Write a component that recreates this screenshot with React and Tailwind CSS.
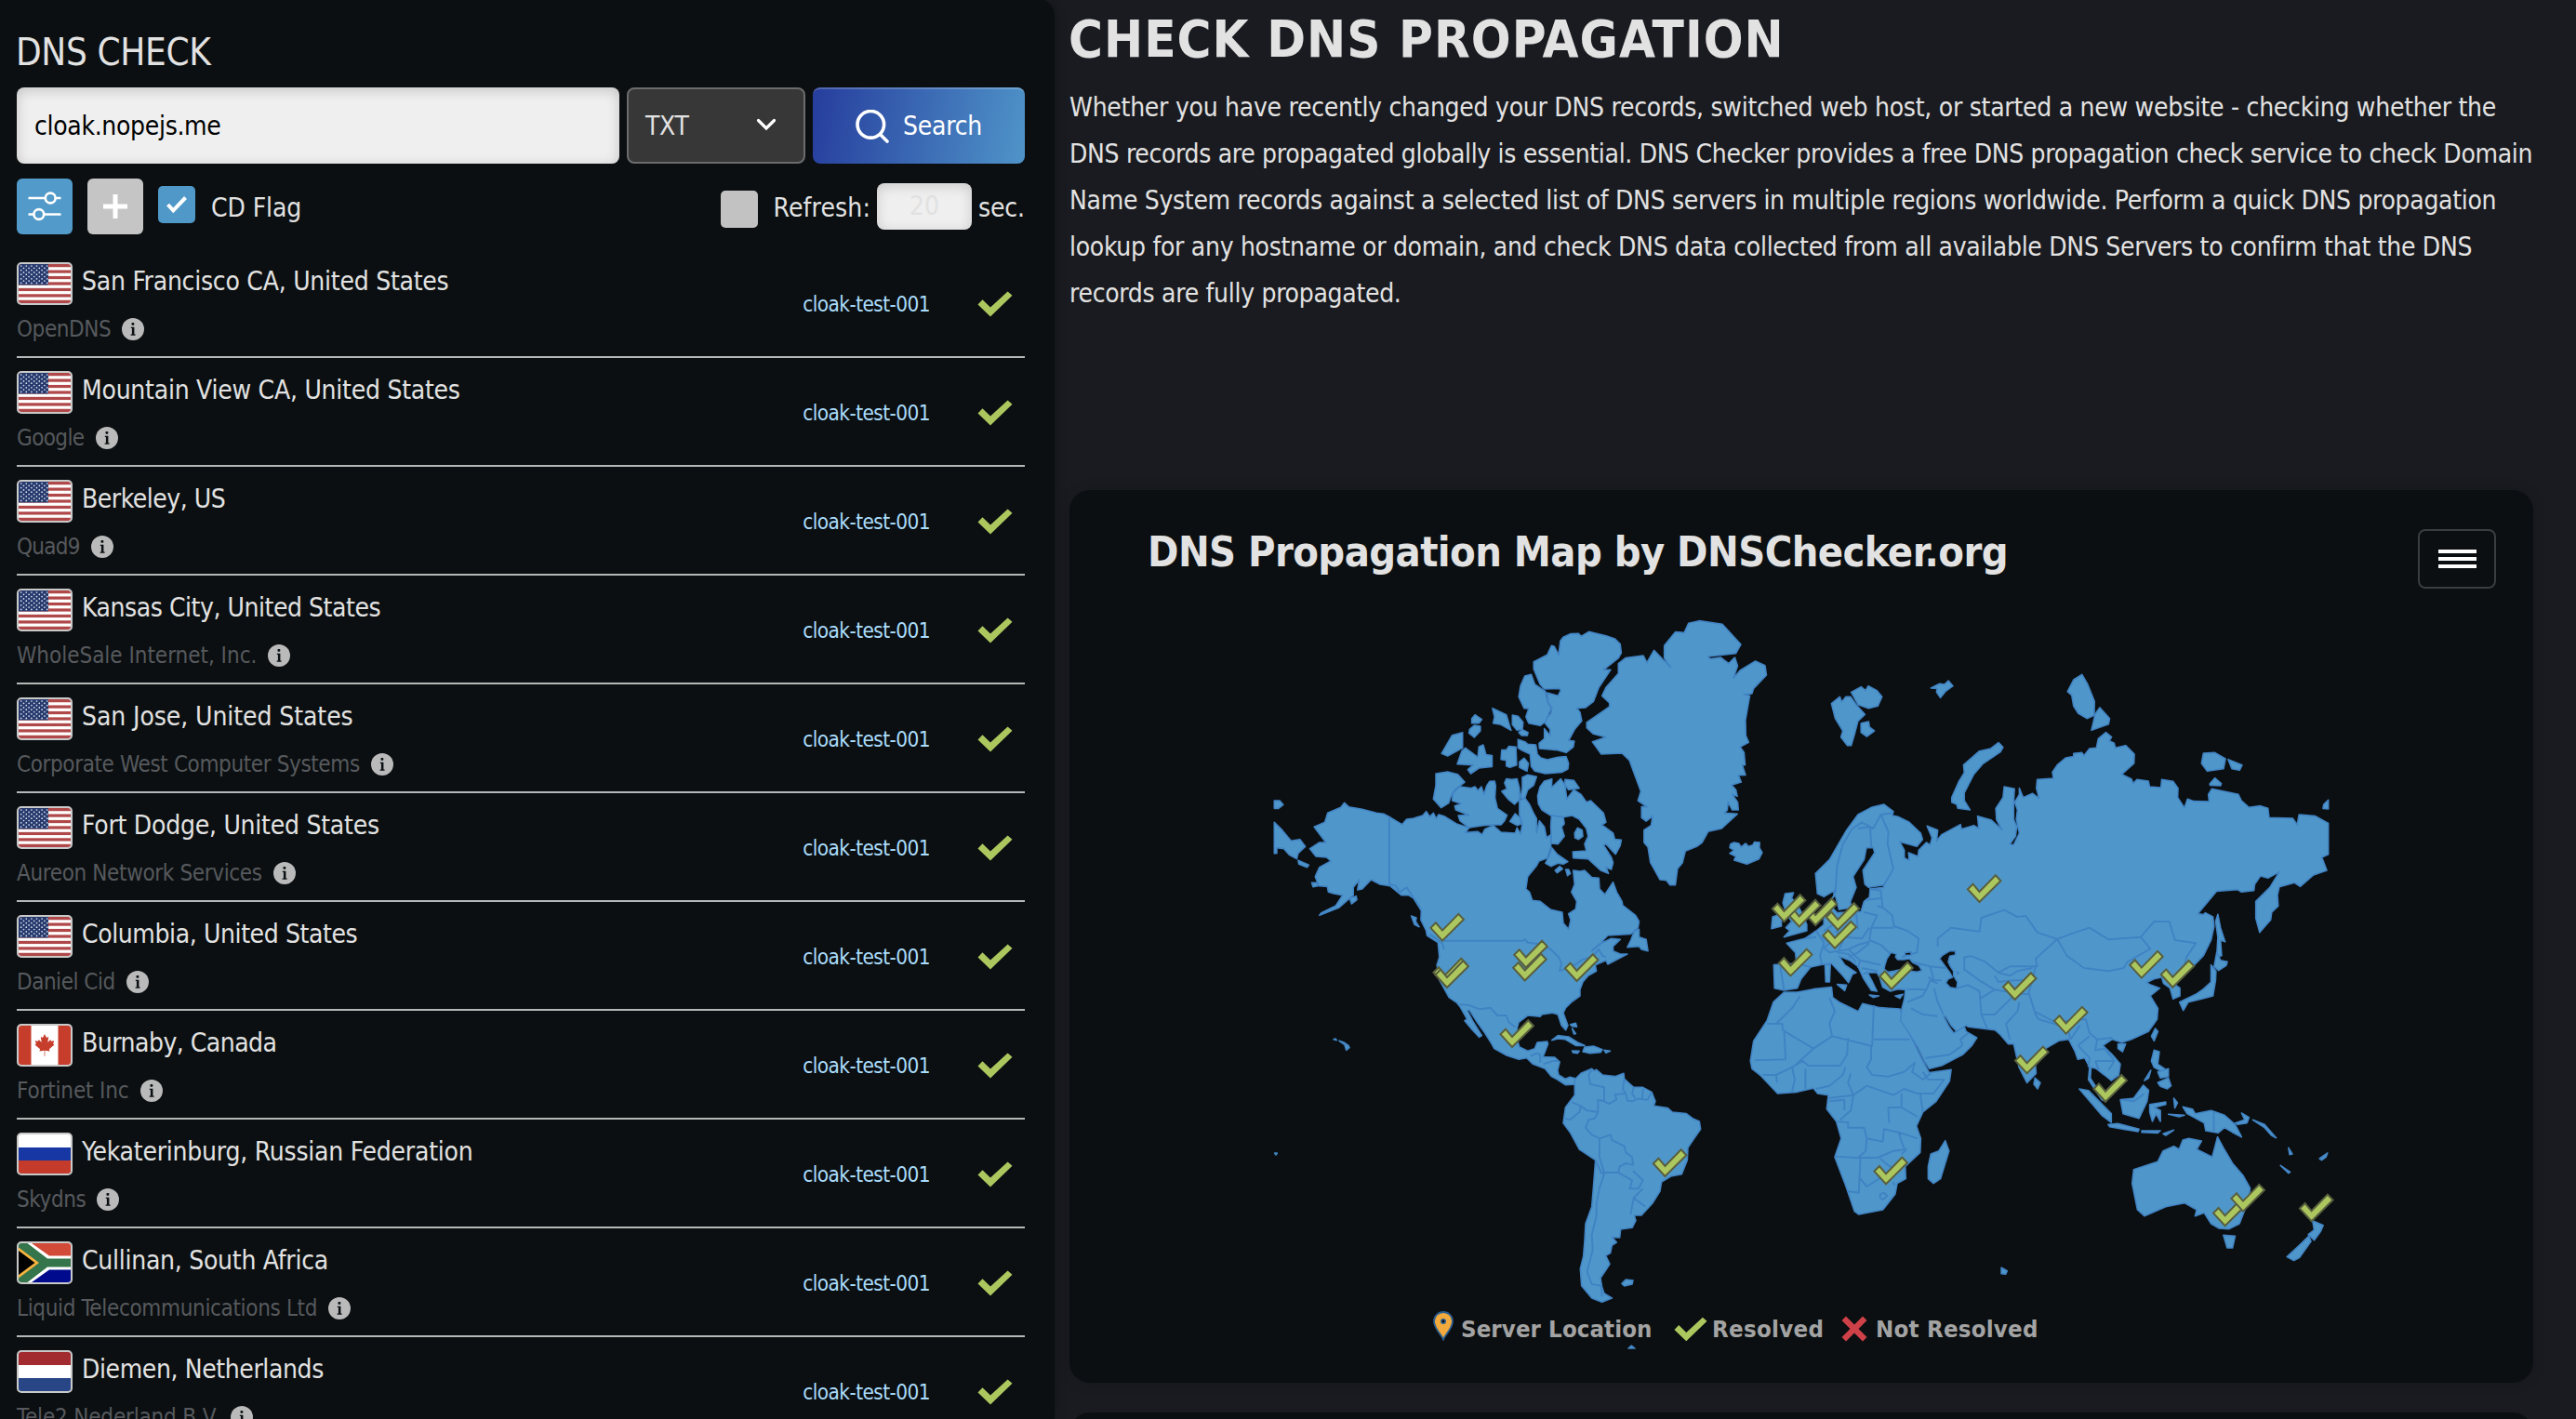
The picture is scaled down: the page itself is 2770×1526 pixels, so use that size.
import React from "react";

const SERVERS = [
  { flag: "us", city: "San Francisco CA, United States", host: "OpenDNS", cityTrack: "tracking-[-0.25px]", hostTrack: "tracking-[-0.4px]" },
  { flag: "us", city: "Mountain View CA, United States", host: "Google", cityTrack: "tracking-[-0.25px]", hostTrack: "tracking-[-0.6px]" },
  { flag: "us", city: "Berkeley, US", host: "Quad9", cityTrack: "tracking-[-0.48px]", hostTrack: "tracking-[-0.7px]" },
  { flag: "us", city: "Kansas City, United States", host: "WholeSale Internet, Inc.", cityTrack: "tracking-[-0.46px]", hostTrack: "tracking-[-0.02px]" },
  { flag: "us", city: "San Jose, United States", host: "Corporate West Computer Systems", cityTrack: "tracking-[-0.08px]", hostTrack: "tracking-[-0.38px]" },
  { flag: "us", city: "Fort Dodge, United States", host: "Aureon Network Services", cityTrack: "tracking-[-0.25px]", hostTrack: "tracking-[-0.36px]" },
  { flag: "us", city: "Columbia, United States", host: "Daniel Cid", cityTrack: "tracking-[-0.4px]", hostTrack: "tracking-[-0.48px]" },
  { flag: "ca", city: "Burnaby, Canada", host: "Fortinet Inc", cityTrack: "tracking-[-0.52px]", hostTrack: "tracking-[-0.15px]" },
  { flag: "ru", city: "Yekaterinburg, Russian Federation", host: "Skydns", cityTrack: "tracking-[-0.23px]", hostTrack: "tracking-[-0.4px]" },
  { flag: "za", city: "Cullinan, South Africa", host: "Liquid Telecommunications Ltd", cityTrack: "tracking-[-0.27px]", hostTrack: "tracking-[-0.34px]" },
  { flag: "nl", city: "Diemen, Netherlands", host: "Tele2 Nederland B.V.", cityTrack: "tracking-[-0.4px]", hostTrack: "tracking-[-0.17px]" },
];

const CHECK = "M0 0L-12.6 -13.7L-7 -19.3L0 -11L17.3 -28.7L23 -22.8Z";

function UsFlag() {
  const stripes = [0, 1, 2, 3, 4, 5, 6];
  const stars = [];
  for (let r = 0; r < 9; r++) {
    for (let c = 0; c < (r % 2 ? 5 : 6); c++) {
      stars.push([2.7 + c * 5.6 + (r % 2 ? 2.8 : 0), 2 + r * 2.3]);
    }
  }
  return (
    <svg viewBox="0 0 56 42" className="block h-full w-full">
      <rect width="56" height="42" fill="#fff" />
      {stripes.map((i) => (
        <rect key={i} y={i * 6.46} width="56" height="3.23" fill="#b04748" />
      ))}
      <rect width="32" height="22.4" fill="#263a6e" />
      {stars.map(([x, y], i) => (
        <circle key={i} cx={x} cy={y} r="0.85" fill="#dfe3ee" />
      ))}
    </svg>
  );
}

function CaFlag() {
  return (
    <svg viewBox="0 0 56 42" className="block h-full w-full">
      <rect width="56" height="42" fill="#fff" />
      <rect width="13.5" height="42" fill="#c63d2c" />
      <rect x="42.5" width="13.5" height="42" fill="#c63d2c" />
      <path
        fill="#c63d2c"
        d="M28 9l2 4 2.2-1-.9 6 3-3 .7 1.8 3.2-.5-1 3.4 1.3.9-5.6 4.6.6 2.3-5.2-.8.1 6h-.8l.1-6-5.2.8.6-2.3-5.6-4.6 1.3-.9-1-3.4 3.2.5.7-1.8 3 3-.9-6 2.2 1z"
      />
    </svg>
  );
}

function BandFlag({ bands }) {
  return (
    <svg viewBox="0 0 56 42" className="block h-full w-full">
      {bands.map((b, i) => (
        <rect key={b} y={i * 14} width="56" height="14" fill={b} />
      ))}
    </svg>
  );
}

function ZaFlag() {
  return (
    <svg viewBox="0 0 56 42" className="block h-full w-full">
      <rect width="56" height="42" fill="#fff" />
      <path d="M14 0H56V13.5H33Z" fill="#d24a38" />
      <path d="M14 42H56V28.5H33Z" fill="#000a8c" />
      <path d="M0 0H9.5L31 16.5H56V25.5H31L9.5 42H0Z" fill="#35754b" />
      <path d="M0 4.5L22 21L0 37.5Z" fill="#f6b33f" />
      <path d="M0 8L17.5 21L0 34Z" fill="#000" />
    </svg>
  );
}

function Flag({ code }) {
  return (
    <div className="h-[46px] w-[60px] shrink-0 overflow-hidden rounded-[5px] border-2 border-[#c9c9c9] bg-[#c9c9c9]">
      {code === "us" && <UsFlag />}
      {code === "ca" && <CaFlag />}
      {code === "ru" && <BandFlag bands={["#ffffff", "#1637a4", "#c43b2c"]} />}
      {code === "za" && <ZaFlag />}
      {code === "nl" && <BandFlag bands={["#a12b2e", "#ffffff", "#284686"]} />}
    </div>
  );
}

function InfoIcon() {
  return (
    <svg viewBox="0 0 24 24" className="h-6 w-6 shrink-0">
      <circle cx="12" cy="12" r="12" fill="#bababa" />
      <rect x="10.5" y="4.9" width="2.8" height="2.8" rx="0.8" fill="#0b0f11" />
      <path d="M9.8 9.8h3.6v7.8h1.2v1.2H9.6v-1.2h1.3v-6.6H9.8z" fill="#0b0f11" />
    </svg>
  );
}

function CheckIcon({ className }) {
  return (
    <svg viewBox="0 0 38 28" className={className}>
      <path d="M14 27.5L0.5 14.5L5.5 9.3L14 17.6L32.6 0.6L37.5 4.8Z" fill="#adc75f" />
    </svg>
  );
}

function ServerRow({ server }) {
  return (
    <div className="flex h-[117px] shrink-0 border-b-2 border-[#b6b8b8] pt-[14px]">
      <div className="flex flex-1 flex-col">
        <div className="flex h-[46px] gap-[10px] text-[28px] leading-[42px] whitespace-nowrap text-[#e2e2e2]">
          <Flag code={server.flag} />
          <span className={server.cityTrack}>{server.city}</span>
        </div>
        <div className="mt-[10px] flex h-8 items-center gap-[12px] text-[24px] leading-8 whitespace-nowrap text-[#56595d]">
          <span className={server.hostTrack}>{server.host}</span>
          <InfoIcon />
        </div>
      </div>
      <span className="mt-[29px] mr-[51px] text-[22.4px] leading-8 tracking-[-0.57px] whitespace-nowrap text-[#aadcfb]">
        cloak-test-001
      </span>
      <CheckIcon className="mt-[31px] mr-[13px] h-7 w-[38px]" />
    </div>
  );
}

function Panel() {
  return (
    <aside className="-mt-[2px] flex h-[1528px] w-[1134px] shrink-0 flex-col overflow-hidden rounded-tr-[20px] bg-[#0b0f11] pr-8 pl-[18px] shadow-[0_0_12px_rgba(0,0,0,0.35)]">
      <h2 className="mt-[28px] ml-[-1px] shrink-0 text-[40px] leading-[60px] tracking-[-0.34px] text-[#e2e2e2]">
        DNS CHECK
      </h2>
      <div className="mt-2 flex h-[82px] shrink-0 gap-2">
        <div className="flex w-[648px] items-center rounded-lg bg-[#efefef] pt-[2px] pl-[19px] text-[28px] tracking-[-0.32px] text-black shadow-[inset_0_3px_14px_rgba(0,0,0,0.18)]">
          cloak.nopejs.me
        </div>
        <div className="flex w-[192px] items-center justify-between rounded-lg border-2 border-[#6c6c6c] bg-[#373737] pt-[2px] pr-[28px] pl-[18px] text-[28px] tracking-[-0.32px] text-[#e2e2e2]">
          TXT
          <svg viewBox="0 0 24 16" className="-mt-1 h-4 w-6">
            <path d="M3.5 3.5L12 12L20.5 3.5" fill="none" stroke="#fff" strokeWidth="3.2" strokeLinecap="round" />
          </svg>
        </div>
        <div className="flex w-[228px] items-center gap-[15px] rounded-lg border-t-2 border-white/20 bg-[linear-gradient(100deg,#263d9d_0%,#4f94c9_100%)] bg-origin-border pl-[46px] text-[28px] tracking-[-0.24px] text-white">
          <svg viewBox="0 0 36 36" className="h-9 w-9 shrink-0">
            <circle cx="16.3" cy="15.8" r="14.3" fill="none" stroke="#fff" strokeWidth="3.6" />
            <path d="M26.5 26.5L34 34" stroke="#fff" strokeWidth="3.6" strokeLinecap="round" />
          </svg>
          Search
        </div>
      </div>
      <div className="mt-4 flex h-[60px] shrink-0 items-center text-[28px] text-[#e2e2e2]">
        <div className="flex h-[60px] w-[60px] items-center justify-center rounded-md bg-[#519ac9]">
          <svg viewBox="0 0 36 32" className="h-8 w-9" fill="none" stroke="#fff" strokeWidth="2.6">
            <path d="M0.5 7H18.5M30 7H35.5" />
            <circle cx="24.2" cy="7" r="5.4" />
            <path d="M0.5 24.5H6M17.5 24.5H35.5" />
            <circle cx="11.8" cy="24.5" r="5.4" />
          </svg>
        </div>
        <div className="ml-4 flex h-[60px] w-[60px] items-center justify-center rounded-md bg-[#c5c5c5]">
          <svg viewBox="0 0 26 26" className="h-[26px] w-[26px]">
            <path d="M13 0V26M0 13H26" stroke="#fff" strokeWidth="5" />
          </svg>
        </div>
        <div className="mt-2 ml-4 flex h-10 w-10 items-center justify-center self-start rounded-[5px] bg-[#5098c8]">
          <svg viewBox="0 0 24 20" className="h-5 w-6">
            <path d="M2.5 10L8.3 16.3L21.5 2.5" fill="none" stroke="#fff" strokeWidth="4" />
          </svg>
        </div>
        <span className="mt-[3px] ml-[17px] tracking-[-0.1px]">CD Flag</span>
        <div className="mt-[6px] ml-auto h-10 w-10 rounded-[5px] bg-[#c2c2c2]" />
        <span className="mt-[3px] ml-[17px] tracking-[0.12px]">Refresh:</span>
        <div className="ml-[7px] flex h-[50px] w-[102px] items-center justify-center rounded-lg bg-[#efefef] text-[#e1e1e1] shadow-[inset_0_3px_14px_rgba(0,0,0,0.16)]">
          20
        </div>
        <span className="mt-[3px] ml-[7px] w-[50px] tracking-[-0.16px]">sec.</span>
      </div>
      <div className="mt-4 flex shrink-0 flex-col">
        {SERVERS.map((s) => (
          <ServerRow key={s.city} server={s} />
        ))}
      </div>
    </aside>
  );
}

/* Land shapes of the western half */
const NORTH_AMERICA = [
  "M250 667L262 680L300 688L340 700L360 703L380 715L412 737L425 720L445 717L470 708L480 695L490 712L500 700L508 718L515 705L530 710L565 735L600 748L590 763L625 760L637 770L645 752L668 740L690 762L730 765L735 748L745 768L750 735L742 705L742 660L757 652L770 672L782 702L790 718L790 765L798 725L812 745L818 780L830 770L830 810L820 845L797 855L790 870L765 905L760 945L770 955L778 982L800 985L830 1012L862 1020L865 1055L880 1075L886 1045L880 1025L900 1010L903 985L888 955L897 930L893 885L912 888L925 885L945 908L965 910L967 945L982 963L1005 923L1015 955L1030 985L1032 998L1068 1030L1078 1050L1075 1070L1055 1090L990 1095L965 1125L945 1145L975 1118L1000 1105L1025 1108L1005 1130L1005 1145L1025 1155L1045 1155L990 1188L985 1175L955 1190L958 1210L935 1225L920 1245L912 1270L912 1290L890 1308L872 1328L865 1345L878 1385L872 1400L860 1385L850 1350L835 1345L805 1350L800 1357L765 1353L740 1375L735 1395L735 1430L742 1455L765 1468L785 1460L792 1440L820 1437L822 1445L808 1487L841 1488L855 1503L849 1530L852 1545L871 1558L884 1552L910 1560L905 1575L871 1577L849 1560L832 1550L814 1525L780 1510L762 1490L740 1495L706 1482L671 1460L664 1445L645 1410L623 1375L601 1335L595 1337L610 1370L636 1418L629 1423L610 1400L588 1370L595 1365L575 1325L566 1312L544 1295L531 1268L515 1235L510 1190L517 1165L513 1118L482 1095L480 1080L465 1045L466 1015L445 975L430 965L410 965L378 935L350 930L325 915L300 945L287 948L292 915L275 940L275 965L235 1005L180 1030L185 1022L225 1000L245 965L220 960L205 955L202 937L178 935L168 905L180 875L212 855L200 843L170 840L153 815L180 795L198 795L165 745L195 730L203 700L240 682Z",
  "M1180 116L1205 118L1217 88L1247 80L1312 91L1364 156L1350 185L1272 195L1278 203L1307 198L1330 218L1347 198L1355 225L1343 265L1362 240L1405 210L1432 224L1436 255L1400 298L1395 315L1373 317L1389 322L1377 400L1378 450L1386 472L1362 487L1373 505L1376 545L1368 545L1377 577L1357 578L1365 600L1338 610L1350 625L1354 646L1340 640L1355 665L1357 690L1340 690L1328 665L1326 690L1318 700L1354 703L1310 750L1272 760L1255 795L1240 808L1208 823L1200 860L1186 880L1180 932L1165 932L1155 917L1137 915L1110 860L1103 810L1092 795L1092 755L1112 740L1116 710L1098 726L1085 715L1085 680L1100 680L1075 660L1083 630L1062 565L1051 530L1030 507L972 510L947 470L985 455L950 445L931 425L931 408L995 357L995 345L974 322L985 295L1020 250L1020 218L1040 200L1090 192L1100 215L1120 175L1145 205L1167 230L1149 200L1149 160Z",
  "M1335 800L1345 795L1358 798L1365 810L1378 798L1385 808L1398 803L1402 794L1417 795L1416 812L1424 828L1415 848L1381 865L1345 852L1350 840L1333 830L1345 820L1333 812Z",
  "M908 121L885 122L865 133L857 145L852 190L840 163L832 160L820 190L782 212L782 235L800 285L812 300L855 298L858 305L850 322L820 312L822 340L833 362L830 380L812 400L815 412L828 430L828 450L812 428L812 460L797 475L798 492L850 497L873 505L893 487L896 468L880 466L897 430L917 403L912 375L903 362L927 360L950 340L965 295L998 238L978 238L1020 200L1028 183L1025 155L1010 138L985 128L937 115L915 130Z",
  "M757 258L775 253L785 285L815 308L820 340L831 362L815 405L800 418L768 410L760 390L768 363L755 362L740 325L745 290Z",
  "M608 395L617 383L636 398L628 410L608 410Z",
  "M602 430L615 417L632 420L632 435L615 456L600 442Z",
  "M582 440L582 490L540 516L523 508L553 449Z",
  "M666 362L705 383L718 433L690 415L668 410L672 390Z",
  "M722 384L738 388L752 407L750 430L735 433L722 415Z",
  "M740 440L750 431L766 440L764 450L748 450Z",
  "M590 490L625 520L628 487L640 480L648 512L665 515L665 550L628 555L605 573L597 560L612 545L567 542L580 500Z",
  "M692 497L705 497L712 485L732 487L734 545L715 553L705 548L705 530L690 527Z",
  "M755 523L767 540L763 565L742 553L742 535Z",
  "M738 463L757 470L765 478L788 480L792 510L802 522L820 528L850 520L873 518L880 540L878 558L862 568L815 573L785 565L775 550L772 510L750 498L738 490Z",
  "M507 573L540 567L568 575L588 600L560 625L548 650L543 668L522 683L500 655L507 610Z",
  "M555 635L575 615L605 620L617 615L625 628L635 615L642 640L650 612L658 598L672 597L675 612L673 650L680 685L707 707L700 725L690 738L670 738L640 740L600 747L575 725L570 708L600 707L563 690L560 677L578 670L553 660Z",
  "M705 590L720 592L735 590L742 620L743 655L728 672L710 655L692 630L707 622L700 603Z",
  "M750 585L765 577L790 583L782 610L765 625L757 652L745 652L750 620Z",
  "M730 702L745 717L747 735L735 740L715 727Z",
  "M793 645L800 615L812 597L833 590L832 618L858 590L870 610L875 655L895 625L915 640L930 665L942 660L978 700L985 730L973 738L1005 765L1010 785L1028 787L1025 805L1012 833L985 800L978 803L1000 843L1005 860L1000 882L985 875L992 895L970 885L935 848L893 845L892 825L930 822L925 800L935 775L930 750L910 720L890 708L865 713L830 708L805 690L795 670Z",
  "M870 592L895 595L910 620L880 625L870 610Z",
  "M832 708L865 714L868 735L860 745L868 775L850 800L832 798L830 740Z",
  "M897 765L905 748L918 755L920 775L908 785L898 780Z",
  "M833 812L848 833L878 857L865 865L850 862L830 872L815 862L825 840Z",
  "M842 885L855 872L863 880L848 893Z",
  "M872 882L880 882L885 895L877 902Z",
  "M53 730L75 755L100 790L125 785L140 808L120 830L116 848L95 835L80 815L60 812L60 830L53 830Z",
  "M53 660L68 660L78 673L65 685L53 685Z",
  "M120 853L150 868L145 875L122 865Z",
  "M265 975L283 968L285 980L270 993Z",
  "M158 925L172 925L175 935L162 938Z",
  "M438 1032L452 1038L450 1050L460 1067L447 1060Z",
  "M1065 1080L1078 1075L1078 1100L1098 1108L1103 1145L1085 1140L1078 1130L1045 1133L1055 1110Z",
  "M833 1433L850 1418L880 1422L905 1440L925 1450L900 1450L870 1430L850 1428Z",
  "M925 1455L950 1452L975 1463L970 1472L940 1475L920 1470Z",
  "M890 1467L910 1468L905 1475L892 1473Z",
  "M980 1465L997 1468L985 1474Z",
  "M885 1382L900 1378L903 1390L890 1388Z",
  "M890 1395L900 1412L895 1413Z",
];
const NORTH_AMERICA_BORDERS =
  "M376 715L376 928L395 935L405 955L425 940L445 975L465 1010M490 1090L525 1120L530 1140M525 1112L752 1112L757 1107L765 1118L800 1123L830 1140L852 1165L860 1185L855 1210L900 1188L920 1172L945 1165L965 1140L975 1160L985 1165M945 1145L965 1125M575 1318L600 1320L630 1333L660 1328L680 1353L705 1353L712 1375L730 1390M772 1485L790 1475L800 1478L800 1505M809 1510L835 1500L852 1500";

const SOUTH_AMERICA = [
  "M1030 300L1050 280L1085 265L1092 272L1100 268L1120 285L1160 290L1188 280L1190 298L1220 325L1250 325L1278 340L1290 370L1285 385L1330 392L1345 405L1390 410L1410 425L1432 435L1436 460L1415 490L1395 520L1393 560L1375 605L1340 612L1310 630L1305 660L1280 700L1245 738L1222 738L1227 755L1215 778L1178 783L1175 810L1150 808L1165 825L1150 835L1145 860L1130 868L1143 895L1130 915L1113 940L1118 970L1125 990L1150 1005L1118 1018L1085 1005L1052 965L1048 910L1058 870L1062 820L1065 765L1085 710L1090 650L1097 560L1045 525L1015 470L993 440L1000 390L1030 350Z",
  "M1182 958L1195 945L1218 948L1215 960L1190 966Z",
  "M1203 1167L1213 1158L1224 1167Z",
  "M62 537L70 537L66 543Z",
  "M252 170L258 168L262 173Z",
  "M270 175L285 180L300 190L303 197L293 205L288 188Z",
];
const SOUTH_AMERICA_BORDERS =
  "M1085 268L1075 285L1080 315L1125 325L1125 370L1105 365L1105 405L1070 400L1050 385L1020 373M1050 385L1045 405L1015 430L1000 425M1105 405L1095 425L1075 430L1065 455L1085 478L1110 490L1145 478L1150 495L1190 515L1195 535L1215 550L1218 575L1195 570L1175 580L1170 600L1125 600L1110 550L1110 490M1097 560L1115 600L1125 605L1110 650L1100 700L1100 740L1085 800L1088 850L1070 920L1085 960L1115 965L1118 1000M1170 600L1215 625L1208 652L1235 652L1250 625L1218 595M1250 652L1220 682L1258 710M1220 682L1210 735M1190 298L1185 330L1195 345L1160 348L1165 365L1140 378L1125 370M1195 345L1200 368L1215 370L1235 362L1265 365L1275 345M1220 325L1215 345L1225 360M1250 330L1248 362";

/* Land shapes of the eastern half */
const EURASIA = [
  "M275 682L308 672L333 695L330 708L345 712L375 730L405 765L410 785L395 808L350 793L362 820L362 845L375 853L373 828L398 840L400 820L420 795L430 803L435 780L422 742L450 755L447 790L460 770L510 737L512 752L545 740L558 750L555 710L590 722L620 755L605 722L603 685L622 650L625 615L652 622L650 665L650 720L658 745L655 775L640 800L650 803L665 765L657 720L660 690L653 665L665 640L665 620L675 650L700 637L717 653L710 620L712 592L755 588L752 568L765 545L787 522L808 518L808 508L830 505L835 515L850 492L868 490L873 460L893 440L908 455L902 467L915 475L918 490L945 482L968 510L967 540L935 575L960 590L965 605L975 592L1005 597L1008 615L1038 618L1040 592L1070 598L1083 620L1082 650L1100 683L1108 655L1125 662L1165 663L1163 640L1172 622L1242 640L1250 660L1270 682L1300 677L1320 685L1323 715L1385 717L1397 738L1402 705L1445 710L1479 733L1479 833L1462 843L1475 885L1440 900L1405 937L1390 925L1350 938L1345 965L1347 1000L1330 1020L1327 1045L1298 1085L1288 1040L1288 985L1325 940L1350 890L1320 910L1300 903L1285 930L1283 950L1250 955L1240 947L1185 952L1135 1025L1150 1028L1155 1022L1175 1035L1178 1065L1170 1110L1150 1160L1122 1195L1100 1215L1072 1225L1065 1245L1088 1265L1088 1290L1070 1300L1062 1265L1045 1250L1040 1230L1020 1235L1000 1247L1012 1255L1035 1265L1010 1290L1030 1330L1028 1365L1005 1405L960 1430L935 1440L910 1430L885 1450L910 1480L931 1510L927 1545L907 1563L889 1545L868 1525L854 1520L852 1555L865 1580L880 1595L893 1630L882 1625L863 1590L847 1560L850 1520L837 1490L819 1495L812 1470L795 1430L769 1435L734 1460L706 1490L709 1540L685 1570L664 1520L650 1445L636 1445L615 1415L601 1400L530 1390L525 1385L500 1405L485 1385L470 1355L465 1355L480 1390L492 1410L520 1390L525 1405L553 1425L540 1450L515 1480L460 1515L428 1525L415 1500L397 1455L369 1400L352 1370L355 1333L362 1300L365 1270L345 1268L325 1275L305 1262L297 1230L290 1215L265 1215L278 1245L290 1275L275 1272L255 1235L240 1195L218 1175L190 1162L205 1190L235 1215L225 1220L215 1247L200 1225L170 1185L140 1190L115 1197L90 1235L80 1265L45 1272L20 1265L18 1190L78 1185L75 1150L52 1120L100 1105L130 1080L150 1060L150 1000L175 970L178 950L150 970L133 960L128 895L165 850L210 755L240 705Z",
  "M170 347L192 325L197 342L208 325L220 325L235 350L258 382L240 403L232 440L222 482L212 482L195 455L200 435L180 395Z",
  "M222 310L248 293L260 305L267 290L290 305L303 325L292 355L268 362L240 350Z",
  "M248 410L268 405L270 423L283 435L263 453L248 440Z",
  "M432 297L455 283L468 285L478 273L490 290L470 308L457 328L447 310L448 298Z",
  "M830 253L845 285L863 340L862 385L843 395L820 378L808 355L803 320L792 308L808 270Z",
  "M877 360L903 395L900 413L855 433L865 380Z",
  "M610 473L622 488L615 503L568 542L545 575L520 635L520 660L535 690L503 685L500 672L487 665L487 650L505 600L520 570L518 545L560 500L590 492Z",
  "M1150 507L1180 505L1208 525L1203 557L1160 565L1145 540Z",
  "M1215 527L1252 545L1245 562L1225 557Z",
  "M1167 605L1180 587L1197 605L1195 612L1167 610Z",
  "M1479 658L1479 687L1465 685L1467 672Z",
  "M1188 1027L1195 1070L1207 1115L1195 1110L1198 1160L1185 1165L1188 1100L1182 1050Z",
  "M1185 1150L1195 1175L1213 1180L1210 1192L1190 1208L1178 1195Z",
  "M1170 1190L1183 1210L1182 1240L1175 1290L1145 1300L1110 1310L1097 1337L1087 1310L1130 1285L1150 1268L1170 1245Z",
  "M48 960L70 957L65 975L78 990L95 1030L105 1060L105 1080L45 1100L60 1080L50 1070L65 1050L50 1020L42 990Z",
  "M15 1035L38 1025L38 1065L12 1073Z",
  "M153 1190L167 1190L165 1245L155 1245Z",
  "M185 1253L210 1255L205 1273Z",
  "M270 1287L295 1290L280 1295Z",
  "M338 1290L358 1285L350 1298Z",
  "M1023 1395L1030 1405L1020 1435L1013 1420Z",
  "M925 1445L945 1445L937 1470L925 1460Z",
];
const BALTIC_SEA = [
  "M308 932L268 940L258 930L253 885L284 828L280 812L262 812L256 850L227 905L235 940L220 985L222 1005L190 1012L180 965L172 975L168 1000L185 1022L248 1018L256 985L270 972L272 945L308 940Z",
];
const INNER_SEAS = [
  "M440 322L447 300L460 280L478 285L475 295L482 303L500 303L520 300L530 312L550 322L560 338L545 343L520 340L490 335L470 340L450 343L438 333Z",
  "M505 280L525 278L525 288L505 290Z",
  "M617 300L625 290L650 275L668 275L668 288L650 292L645 310L652 325L662 340L662 355L675 375L672 397L650 392L637 378L645 365L658 360L650 345L635 325Z",
  "M672 342L680 346L675 350Z",
];
const EURASIA_BORDERS =
  "M450 1130L450 1105L485 1070L560 1082L565 1038L625 1013L660 1035L682 1032L712 1085L765 1107L735 1140L708 1170L712 1195L640 1195L610 1215L575 1180L540 1162L520 1165L520 1210M765 1107L800 1090L850 1070L900 1108L985 1100L1020 1050L1060 1050L1075 1110L1130 1120L1105 1165L1100 1200M765 1107L790 1160L835 1200L900 1210L940 1200L950 1180L1010 1138L985 1100M708 1195L690 1280L705 1340L760 1375L840 1365L850 1410L870 1430L910 1425M380 1180L430 1195L470 1200M430 1195L440 1240L460 1240M440 1240L425 1230M440 1265L450 1310L465 1350M500 1265L530 1255L560 1275L565 1350L580 1395M560 1300L600 1270L650 1280L690 1285M520 1205L560 1240L600 1270M565 1350L600 1350L650 1290M665 1310L660 1340L630 1380L640 1430M450 1250L430 1240L420 1270L370 1268M370 1310L410 1290L420 1270M380 1330L410 1350L450 1355M418 1490L480 1480L515 1450M515 1450L510 1430L530 1410M705 1345L715 1365L770 1385M790 1385L800 1430M825 1385L800 1430M850 1420L820 1450L850 1490L847 1520M870 1430L865 1465L890 1460L915 1500L900 1530M865 1500L915 1500M865 1500L875 1530M610 1215L640 1225L660 1210L700 1200M600 1225L610 1245L650 1240L690 1240M240 750L272 745L275 812M272 745L250 730M300 705L320 760L318 800L333 880L308 933M180 960L185 870L200 800L225 750L250 730L280 750L300 705L333 700M270 945L300 950L305 1005L330 1030L335 1065L370 1080L400 1105L395 1150L355 1165M300 975L260 980M255 1020L290 1030L275 1070L335 1070M290 1000L305 1005M275 1070L270 1110L300 1125L330 1160M270 1120L240 1150M145 1100L165 1120L150 1135L165 1150L215 1140L240 1125L270 1115M215 1140L245 1175L300 1190M45 1272L40 1230L35 1195M78 1185L115 1197M130 1080L150 1120L140 1160L145 1190M100 1105L130 1100M240 1150L215 1165M245 1175L240 1200M205 1100L250 1105L270 1070M180 1080L205 1100L190 1140M185 1150L215 1155L235 1180M250 1200L290 1210M255 1220L265 1212M150 1080L175 1060M235 1025L240 1075";

const SOUTH_EAST = [
  "M485 -42L510 -42L540 -52L574 -58L576 -25L590 -8L624 20L632 -5L665 8L702 12L708 40L725 110L745 180L757 218L798 208L795 245L770 310L745 345L733 390L741 430L740 475L712 520L713 560L697 575L693 610L670 660L625 675L617 665L600 580L580 490L592 430L583 375L565 335L568 290L548 285L540 268L510 280L473 285L440 225L425 205L422 180L428 115L453 50L465 -10Z",
  "M787 437L794 470L778 560L765 575L755 560L755 520L760 480L775 470Z",
  "M955 235L965 250L960 270L953 255Z",
  "M1243 430L1267 438L1258 465L1287 490L1297 425L1308 460L1325 510L1345 550L1358 590L1355 630L1338 705L1318 722L1300 720L1285 705L1272 670L1255 680L1258 660L1235 638L1200 650L1160 680L1147 660L1137 575L1140 530L1185 505L1195 470L1215 455L1225 465L1232 435Z",
  "M1308 742L1330 745L1325 783L1315 783Z",
  "M1475 695L1495 710L1490 730L1478 758L1467 740L1478 725Z",
  "M1468 745L1472 762L1450 815L1440 824L1427 812L1450 775Z",
  "M1038 270L1055 275L1098 350L1098 378L1080 355Z",
  "M1092 385L1110 382L1150 400L1148 408L1095 392Z",
  "M1155 405L1190 405L1185 412L1155 410Z",
  "M1195 415L1215 403L1200 420Z",
  "M1115 305L1140 300L1158 258L1168 275L1165 310L1150 365L1120 350Z",
  "M1170 320L1200 312L1200 320L1178 330L1190 340L1190 375L1182 350L1175 375L1170 345Z",
  "M1215 300L1222 315L1217 332Z",
  "M1205 352L1235 355L1225 360Z",
  "M1232 328L1250 335L1255 350L1285 340L1310 355L1330 385L1342 425L1325 410L1310 395L1298 412L1275 405L1272 380L1240 350Z",
  "M1330 380L1348 370L1342 348L1356 362L1352 380L1335 385Z",
  "M1363 370L1385 385L1407 428L1398 420L1385 395Z",
  "M1430 460L1437 480L1432 482Z",
  "M1415 517L1433 538L1430 542Z",
  "M1488 495L1503 477L1500 490L1492 500Z",
  "M1178 145L1188 150L1185 190L1198 205L1195 215L1178 200L1173 180Z",
  "M1185 250L1205 235L1210 260L1203 270L1190 262Z",
  "M1185 215L1205 205L1205 230L1190 235Z",
  "M1172 210L1168 235L1160 243Z",
  "M892 847L903 857L900 868L892 866Z",
];
const SOUTH_EAST_BORDERS =
  "M453 60L482 60L482 80M485 80L488 175L430 178M482 80L540 140L575 100L650 132L653 0M653 110L720 110M470 60L500 10L515 -30M570 -25L580 20L570 60L575 100M648 132L648 175L640 200L650 225L680 230L710 215L730 185L725 215L745 240L760 220M605 105L603 160L590 195L530 195L520 180L500 200L470 225M600 200L595 225L570 260L545 270M525 205L525 270M500 200L505 240L500 280M445 225L470 225L472 250M610 220L605 250L615 290L568 300M615 290L640 260L690 290L710 270L735 285L765 285L785 240L755 240L745 215M740 285L745 345M705 285L705 330L735 360M680 330L705 330M680 330L682 380M585 375L605 378L605 395L635 395L640 430L670 440L672 400L700 410L735 430M580 488L620 492L660 492L690 470L715 465M640 430L638 470L625 490M628 495L625 605L605 600M628 560L640 585L690 530L700 530M665 495L690 530M700 410L705 440L712 470L705 480M665 610L672 605L678 615L670 628L665 620ZM690 570L692 582M615 290L610 340L590 370M570 310L598 305L598 340M1290 345L1290 405M540 140L505 195M1120 305L1140 310L1160 285";

const MARKERS = [
  [1551, 1010.6], [1554, 1058.5], [1556, 1061], [1640.8, 1039.5], [1639.7, 1053.5], [1695.5, 1054], [1626, 1125],
  [1952.2, 994], [1934.7, 995.5], [1918.4, 990], [1976.3, 999], [1973, 1018.7], [1925.4, 1048.4], [2033.9, 1062.7],
  [2128.5, 969], [2166.5, 1074], [2221.6, 1110.6], [2302.8, 1050.6], [2336.3, 1060.7], [2179.6, 1153.3],
  [2264, 1183.7], [1790.4, 1264], [2028, 1272.3], [2392.6, 1317.3], [2412, 1301.6], [2485.6, 1312.3],
];

function Shapes({ shapes, fill }) {
  return shapes.map((d) => (
    <path key={d} d={d} fill={fill} stroke="#4284c4" strokeWidth="1.6" strokeLinejoin="round" vectorEffect="non-scaling-stroke" />
  ));
}

function Borders({ d }) {
  return <path d={d} fill="none" stroke="#4083c3" strokeWidth="2" strokeLinejoin="round" vectorEffect="non-scaling-stroke" />;
}

function WorldMap() {
  return (
    <svg viewBox="1370 660 1140 740" className="mt-[28px] ml-[220px] block h-[740px] w-[1140px] shrink-0 overflow-visible">
      <g transform="translate(1640 1080) scale(0.57405 0.33333)">
        <Shapes shapes={SOUTH_EAST} fill="#4f97cb" />
        <Borders d={SOUTH_EAST_BORDERS} />
      </g>
      <g transform="translate(1900 640) scale(0.40816 0.33333)">
        <Shapes shapes={EURASIA} fill="#4f97cb" />
        <Shapes shapes={BALTIC_SEA} fill="#0b0f11" />
        <Borders d={EURASIA_BORDERS} />
      </g>
      <g transform="translate(1880 930) scale(0.33333)">
        <Shapes shapes={INNER_SEAS} fill="#0b0f11" />
      </g>
      <g transform="translate(1350 640) scale(0.38265 0.33333)">
        <Shapes shapes={NORTH_AMERICA} fill="#4f97cb" />
        <Borders d={NORTH_AMERICA_BORDERS} />
      </g>
      <g transform="translate(1350 1060) scale(0.33333)">
        <Shapes shapes={SOUTH_AMERICA} fill="#4f97cb" />
        <Borders d={SOUTH_AMERICA_BORDERS} />
      </g>
      {MARKERS.map(([x, y]) => (
        <path key={`${x}-${y}`} d={CHECK} transform={`translate(${x} ${y})`} fill="#adc75f" stroke="#585f3f" strokeWidth="2" />
      ))}
    </svg>
  );
}

function Legend() {
  return (
    <div className="mt-2 ml-[391px] flex h-10 shrink-0 items-center text-[25.6px] font-bold text-[#a3a3a3]">
      <svg viewBox="0 0 22 32" className="-mt-[7px] h-8 w-[22px] shrink-0">
        <path d="M11 30.5C9.5 26 1 18.5 1 11A10 10 0 0 1 21 11C21 18.5 12.5 26 11 30.5Z" fill="#f3aa3c" stroke="#2c5f92" strokeWidth="1.8" />
        <circle cx="11" cy="11" r="2.2" fill="#0b0f11" stroke="#2c5f92" strokeWidth="1.6" />
      </svg>
      <span className="ml-2 w-[229px] tracking-[0.08px] whitespace-nowrap">Server Location</span>
      <CheckIcon className="h-[27px] w-9 shrink-0" />
      <span className="ml-[5px] w-[139px] tracking-[0.3px] whitespace-nowrap">Resolved</span>
      <svg viewBox="0 0 28 28" className="h-7 w-7 shrink-0">
        <path d="M0.5 5L5 0.5L14 9.6L23 0.5L27.5 5L18.5 14L27.5 23L23 27.5L14 18.4L5 27.5L0.5 23L9.5 14Z" fill="#cf4148" />
      </svg>
      <span className="ml-[9px] tracking-[0.22px] whitespace-nowrap">Not Resolved</span>
    </div>
  );
}

function MapCard() {
  return (
    <section className="mt-[186px] flex h-[960px] w-[1574px] shrink-0 flex-col rounded-[22px] bg-[#0b0f11] pt-[42px] shadow-[0_0_14px_rgba(0,0,0,0.15)]">
      <div className="flex h-16 shrink-0 items-center justify-between pr-10 pl-[84px]">
        <h2 className="-mt-[15px] text-[44.8px] leading-[60px] font-bold tracking-[-0.57px] text-[#e2e2e2]">
          DNS Propagation Map by DNSChecker.org
        </h2>
        <div className="flex h-16 w-[84px] flex-col items-center justify-center gap-1 rounded-lg border-2 border-[#3a3d3f]">
          <div className="h-1 w-[41px] bg-white" />
          <div className="h-1 w-[41px] bg-white" />
          <div className="h-1 w-[41px] bg-white" />
        </div>
      </div>
      <WorldMap />
      <Legend />
    </section>
  );
}

function Main() {
  return (
    <main className="ml-4 flex flex-col pt-[12px]">
      <h1 className="-ml-[1px] text-[56px] leading-[60px] font-bold tracking-[1.02px] text-[#e2e2e2]">
        CHECK DNS PROPAGATION
      </h1>
      <p className="mt-[19px] flex flex-col text-[28px] leading-[50px] whitespace-nowrap text-[#e2e2e2]">
        <span className="tracking-[-0.27px]">
          Whether you have recently changed your DNS records, switched web host, or started a new website - checking whether the
        </span>
        <span className="tracking-[-0.33px]">
          DNS records are propagated globally is essential. DNS Checker provides a free DNS propagation check service to check Domain
        </span>
        <span className="tracking-[-0.31px]">
          Name System records against a selected list of DNS servers in multiple regions worldwide. Perform a quick DNS propagation
        </span>
        <span className="tracking-[-0.3px]">
          lookup for any hostname or domain, and check DNS data collected from all available DNS Servers to confirm that the DNS
        </span>
        <span className="tracking-[-0.3px]">records are fully propagated.</span>
      </p>
      <MapCard />
      <section className="mt-8 h-[60px] w-[1574px] shrink-0 rounded-t-[22px] bg-[#0b0f11]" />
    </main>
  );
}

export default function App() {
  return (
    <div className="flex h-[1526px] w-[2770px] overflow-hidden bg-[#1a1b20] font-['DejaVu_Sans_Condensed','DejaVu_Sans',sans-serif]">
      <Panel />
      <Main />
    </div>
  );
}
